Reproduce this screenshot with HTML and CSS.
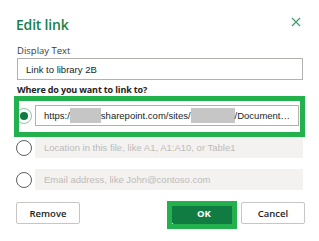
FILE: index.html
```html
<!DOCTYPE html>
<html>
<head>
<meta charset="utf-8">
<link rel="stylesheet" href="styles.css">
</head>
<body>
<div class="dialog">
  <div class="head">
    <h1 class="title">Edit link</h1>
    <span class="close" aria-label="Close">
      <svg width="10" height="10" viewBox="0 0 10 10"><path d="M1 1L9 9M9 1L1 9" stroke="#3c9a66" stroke-width="1.1" fill="none"/></svg>
    </span>
  </div>
  <div class="lbl">Display Text</div>
  <div class="field">Link to library 2B</div>
  <div class="q">Where do you want to link to?</div>
  <div class="opts">
    <div class="opt">
      <span class="radio on"></span>
      <div class="field url">https:/<span class="blur b1"></span>sharepoint.com/sites/<span class="blur b2"></span>/Document…</div>
    </div>
    <div class="opt">
      <span class="radio"></span>
      <div class="field dis">Location in this file, like A1, A1:A10, or Table1</div>
    </div>
    <div class="opt">
      <span class="radio"></span>
      <div class="field dis">Email address, like John@contoso.com</div>
    </div>
  </div>
  <div class="actions">
    <button class="btn">Remove</button>
    <div class="right">
      <button class="btn ok">OK</button>
      <button class="btn">Cancel</button>
    </div>
  </div>
  <div class="mark mark-link"></div>
  <div class="mark mark-ok"></div>
</div>
</body>
</html>
```
FILE: styles.css
```css
html, body { margin: 0; padding: 0; background: #fff; }
body { width: 319px; height: 241px; overflow: hidden; font-family: "Open Sans", "Noto Sans", sans-serif; color: #323130; }
.dialog { position: relative; padding: 10px 16px 0 16px; box-sizing: border-box; width: 319px; height: 241px; }
.head { display: flex; align-items: center; justify-content: space-between; height: 30px; }
.title { margin: 0; font-size: 14px; font-weight: 600; color: #17804a; line-height: 30px; letter-spacing: -0.2px; }
.close { display: flex; width: 10px; height: 10px; margin-right: 2px; margin-top: -6px; }
.lbl { margin-top: 4px; font-size: 9.5px; line-height: 14px; color: #3b3a39; padding-left: 1px; }
.field { box-sizing: border-box; height: 22px; border: 1px solid #b3b0ad; margin-left: 1px; padding: 0 8px; display: flex; align-items: center; font-family: "Liberation Sans", Arial, sans-serif; font-size: 9.5px; color: #201f1e; white-space: nowrap; overflow: hidden; }
.q { margin-top: 3px; font-size: 9px; font-weight: 700; line-height: 14px; padding-left: 1px; color: #252423; letter-spacing: -0.15px; }
.opts { display: flex; flex-direction: column; gap: 11px; margin-top: 8px; }
.opt { display: flex; align-items: center; gap: 3px; height: 21px; }
.opt .field { flex: 1; height: 21px; margin-left: 0; }
.opt .url { margin-right: 4px; }
.radio { box-sizing: border-box; width: 16px; height: 16px; border-radius: 50%; border: 1px solid #605e5c; display: flex; align-items: center; justify-content: center; flex: none; }
.radio.on { border-color: #8cc7a4; }
.radio.on::after { content: ""; width: 8px; height: 8px; border-radius: 50%; background: #107c41; }
.dis { background: #f3f2f1; border-color: #f3f2f1; color: #bdbbb8; }
.blur { display: inline-block; height: 15px; background: #c6c6c6; }
.b1 { width: 31px; }
.b2 { width: 44px; }
.actions { display: flex; justify-content: space-between; margin-top: 12px; }
.right { display: flex; gap: 5px; margin-right: -2px; }
.btn { box-sizing: border-box; width: 64px; height: 22px; border: 1px solid #c8c6c4; border-radius: 2px; background: #fff; font-family: "Open Sans", "Noto Sans", sans-serif; font-size: 9.5px; font-weight: 600; color: #201f1e; padding: 0; }
.btn.ok { background: #107c41; border-color: #107c41; color: #fff; font-weight: 700; }
.mark { position: absolute; border: 5px solid #22b14c; box-sizing: border-box; }
.mark-link { left: 14px; top: 96px; width: 291px; height: 41px; }
.mark-ok { left: 167px; top: 201px; width: 70px; height: 28px; }
```
